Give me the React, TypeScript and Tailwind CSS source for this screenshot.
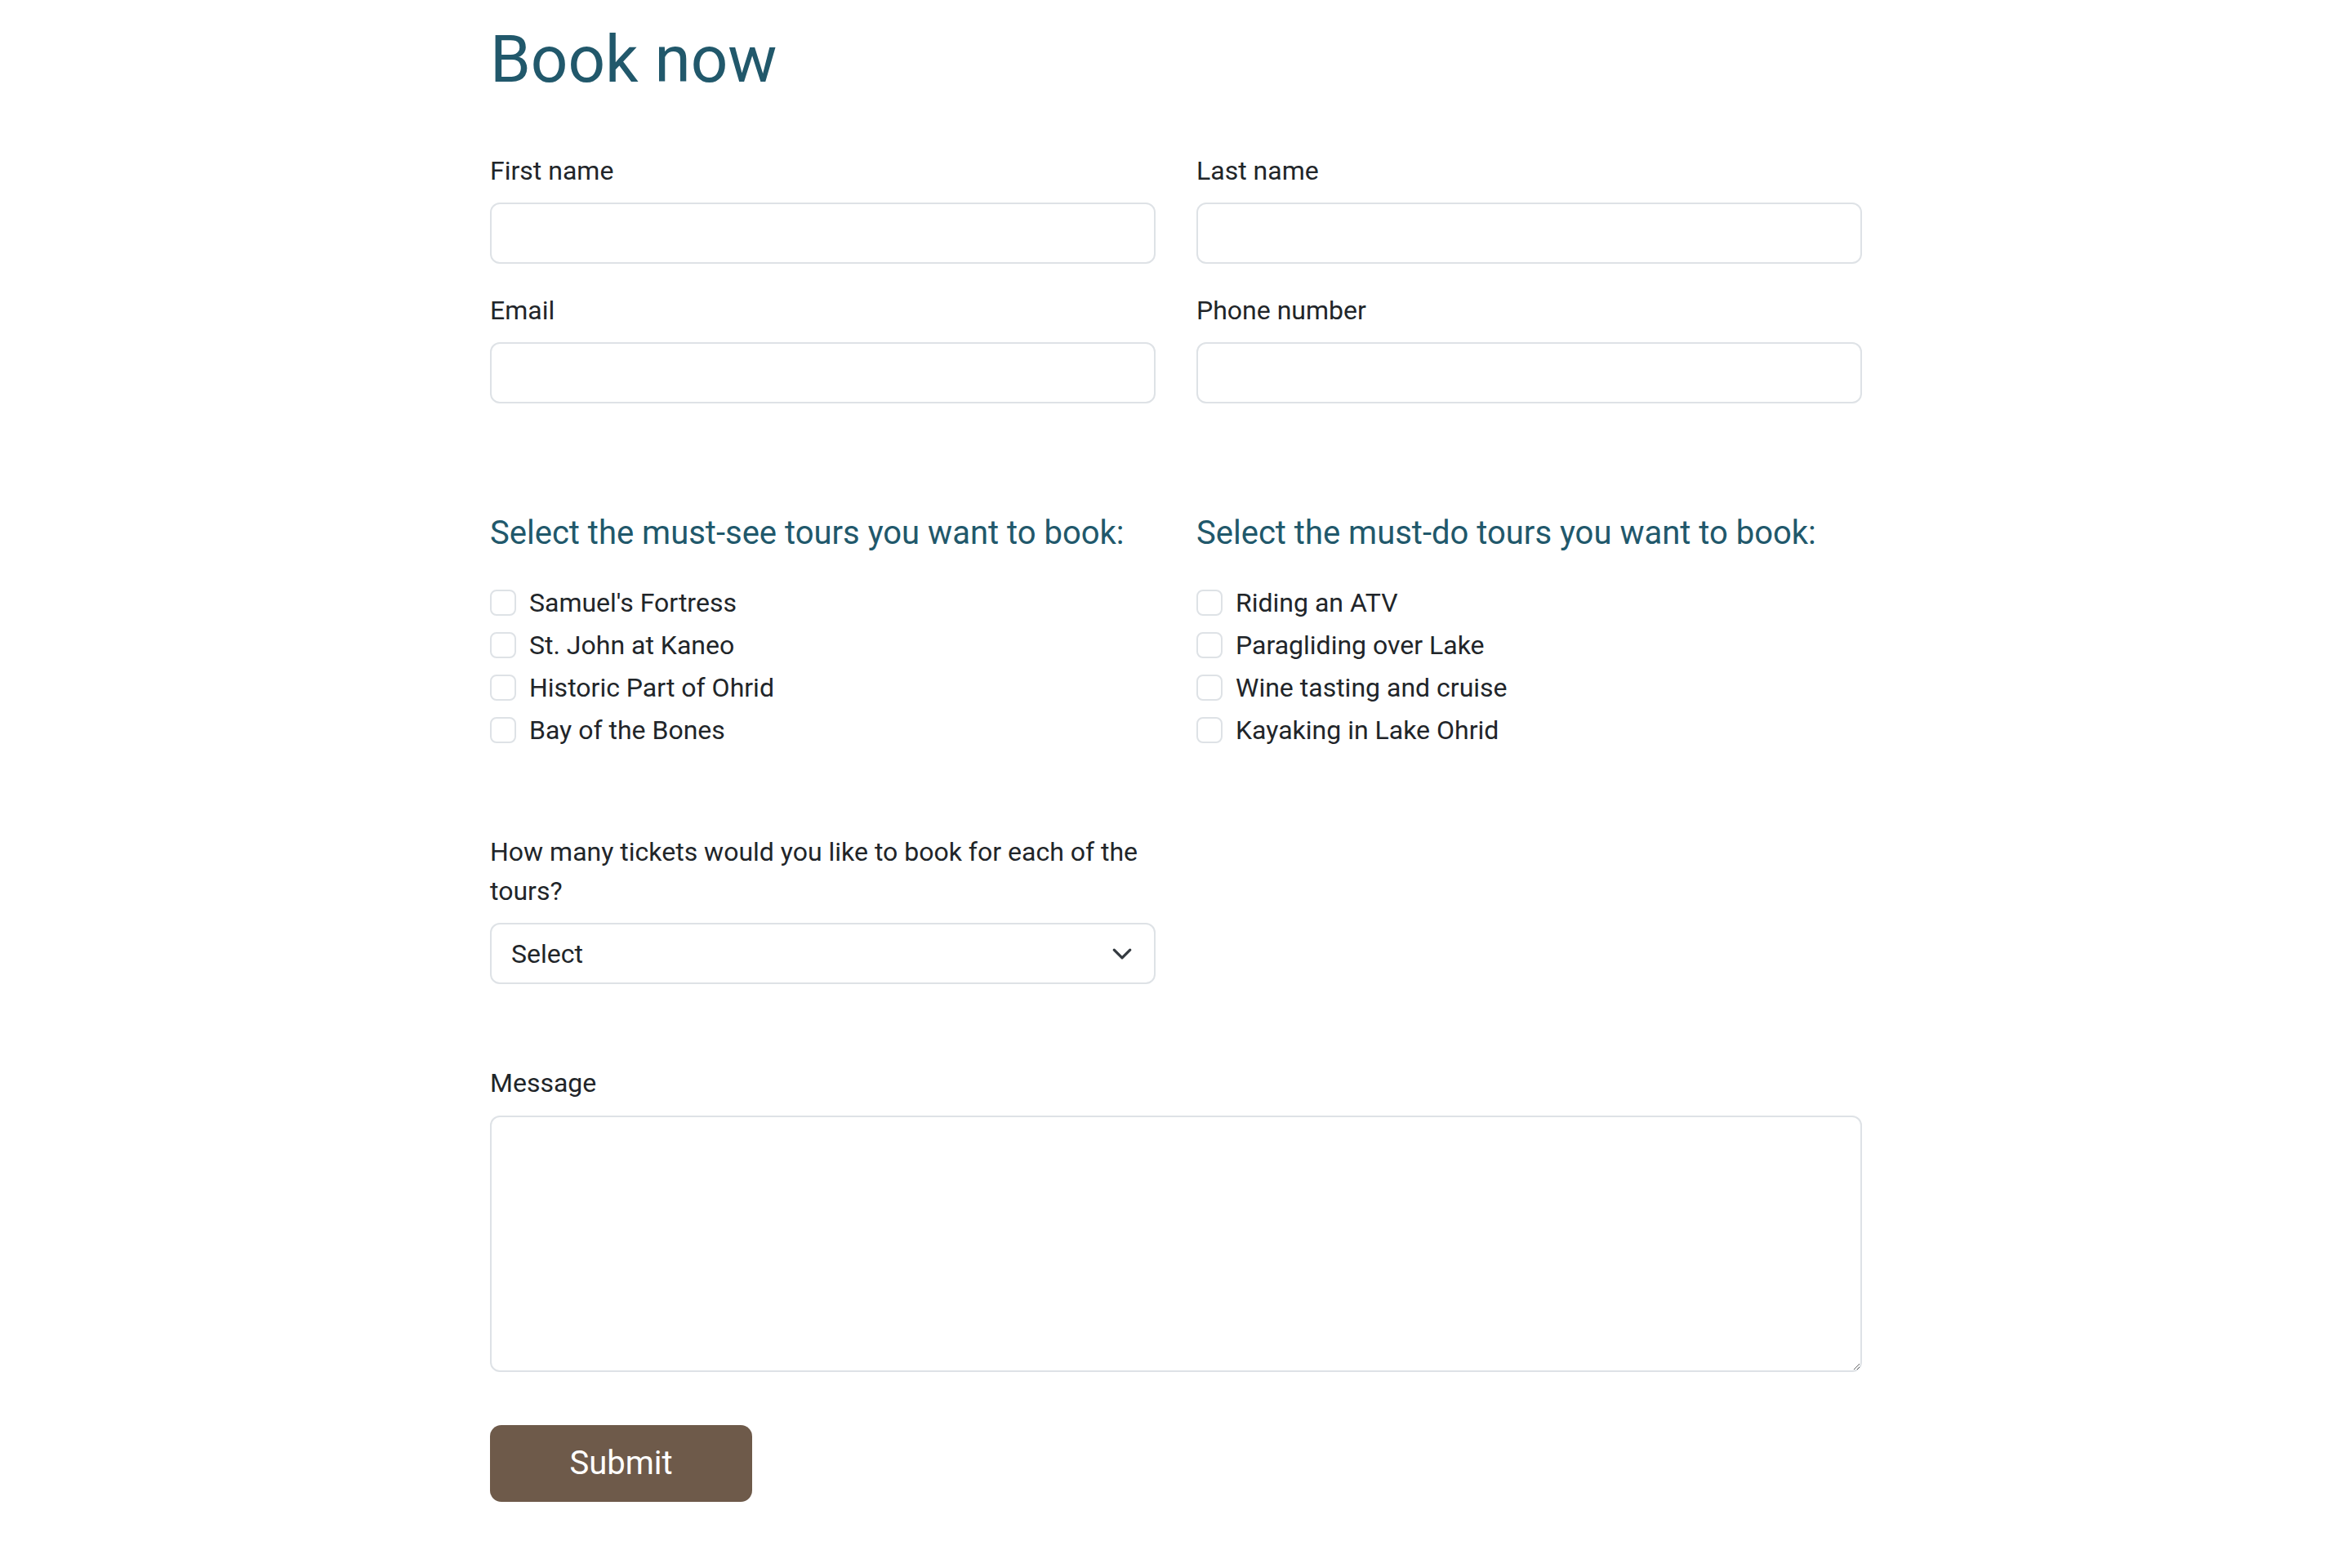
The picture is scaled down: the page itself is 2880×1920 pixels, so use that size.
const mustSee = ["Samuel's Fortress", "St. John at Kaneo", "Historic Part of Ohrid", "Bay of the Bones"];
const mustDo = ["Riding an ATV", "Paragliding over Lake", "Wine tasting and cruise", "Kayaking in Lake Ohrid"];

function Field({ label, type = "text" }: { label: string; type?: string }) {
  return (
    <div>
      <label className="block text-[32px] leading-[48px] mb-[15px]">{label}</label>
      <input
        type={type}
        className="block w-full h-[75px] rounded-[12px] border-2 border-[#dee2e6] bg-white px-[24px] text-[32px] outline-none"
      />
    </div>
  );
}

function TourList({ title, items }: { title: string; items: string[] }) {
  return (
    <div>
      <h2 className="text-[40px] leading-[48px] text-[#21586b]">{title}</h2>
      <ul className="mt-[35px]">
        {items.map((item) => (
          <li key={item} className="flex items-center gap-[16px] text-[32px] leading-[52px]">
            <input
              type="checkbox"
              className="appearance-none m-0 w-[32px] h-[32px] shrink-0 rounded-[8px] border-2 border-[#dee2e6] bg-white"
            />
            <span>{item}</span>
          </li>
        ))}
      </ul>
    </div>
  );
}

export default function App() {
  return (
    <div className="min-h-screen bg-white text-[#212529] font-['Roboto',sans-serif]">
      <form className="mx-auto w-[1680px] pt-[25px] pb-[60px]" onSubmit={(e) => e.preventDefault()}>
        <h1 className="text-[80px] leading-[96px] font-normal text-[#21586b]">Book now</h1>

        <div className="mt-[64px] grid grid-cols-2 gap-x-[50px] gap-y-[33px]">
          <Field label="First name" />
          <Field label="Last name" />
          <Field label="Email" type="email" />
          <Field label="Phone number" type="tel" />
        </div>

        <div className="mt-[135px] grid grid-cols-2 gap-x-[50px]">
          <TourList title="Select the must-see tours you want to book:" items={mustSee} />
          <TourList title="Select the must-do tours you want to book:" items={mustDo} />
        </div>

        <div className="mt-[99px] w-[815px]">
          <label className="block text-[32px] leading-[48px] mb-[15px]">
            How many tickets would you like to book for each of the tours?
          </label>
          <div className="relative">
            <select className="block w-full h-[75px] appearance-none rounded-[12px] border-2 border-[#dee2e6] bg-white pl-[24px] pr-[80px] text-[32px] text-[#212529] outline-none">
              <option>Select</option>
              <option>1</option>
              <option>2</option>
              <option>3</option>
              <option>4</option>
            </select>
            <svg
              className="pointer-events-none absolute right-[28px] top-1/2 -translate-y-1/2"
              width="26"
              height="26"
              viewBox="0 0 16 16"
              fill="none"
            >
              <path d="m2 5 6 6 6-6" stroke="#343a40" strokeWidth="2" strokeLinecap="round" strokeLinejoin="round" />
            </svg>
          </div>
        </div>

        <div className="mt-[97px]">
          <label className="block text-[32px] leading-[48px] mb-[16px]">Message</label>
          <textarea className="block w-full h-[314px] rounded-[12px] border-2 border-[#dee2e6] bg-white p-[24px] text-[32px] outline-none" />
        </div>

        <button
          type="submit"
          className="mt-[65px] w-[321px] h-[94px] rounded-[14px] bg-[#6e5a4a] text-[40px] text-white"
        >
          Submit
        </button>
      </form>
    </div>
  );
}
